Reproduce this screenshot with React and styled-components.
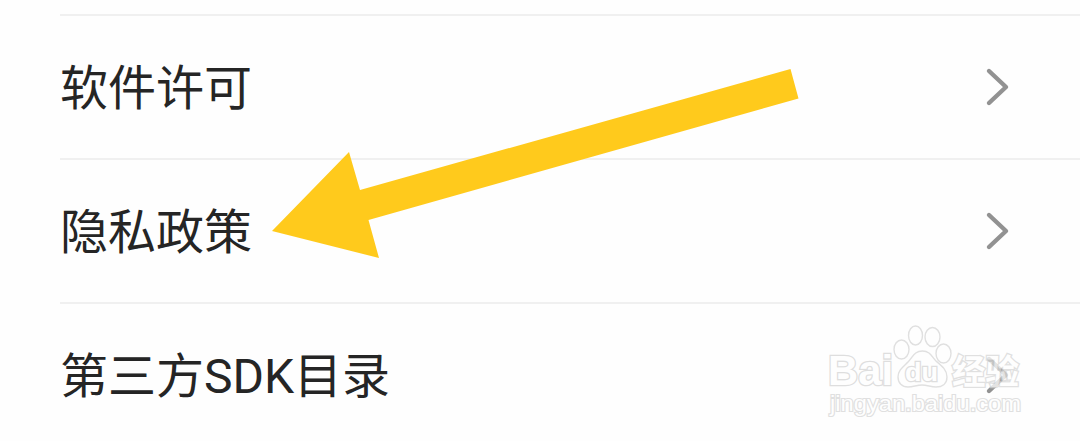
import React from 'react'
import styled, { createGlobalStyle } from 'styled-components'

const items = ['软件许可', '隐私政策', '第三方SDK目录']

const App = () => {
    return (
        <Page>
            <GlobalStyle />
            <List>
                {items.map(item => (
                    <Row key={item}>
                        <Label>{item}</Label>
                        <Chevron />
                    </Row>
                ))}
            </List>
            <Arrow />
            <Watermark />
        </Page>
    )
}

const Chevron = () => (
    <ChevronIcon viewBox="0 0 26 40">
        <path d="M5 4 L22 20 L5 36" />
    </ChevronIcon>
)

const Arrow = () => (
    <Overlay viewBox="0 0 1080 441">
        <polygon
            fill="#ffca1c"
            points="272,231 349,152 360,190 790.5,69 798.5,98.5 368.5,220 379,258"
        />
    </Overlay>
)

const Watermark = () => (
    <Overlay viewBox="0 0 1080 441">
        <Mark>
            <MarkText x="828" y="385" fontSize="42" textLength="65" lengthAdjust="spacingAndGlyphs">Bai</MarkText>
            <ellipse cx="901.500" cy="349.500" rx="7.500" ry="9.500" />
            <ellipse cx="915.500" cy="335.500" rx="7" ry="9.500" />
            <ellipse cx="932.500" cy="337" rx="7.500" ry="9.500" />
            <ellipse cx="943.500" cy="353.500" rx="7.500" ry="9.500" />
            <path d="M922.500 351 C930 351 932 357 936 361 C942 366 947 370 947 377 C947 384 942 387 936 387 C931 387 927 385 922 385 C917 385 913 387 908 387 C902 387 898 383 898 377 C898 370 903 367 908 362 C913 357 914 351 922.500 351 Z" />
            <MarkText x="905" y="381" fontSize="26" textLength="33" lengthAdjust="spacingAndGlyphs">du</MarkText>
            <MarkText x="952" y="383.500" fontSize="34" textLength="67" lengthAdjust="spacingAndGlyphs" $faded>经验</MarkText>
            <SiteText x="830" y="411" fontSize="22" textLength="191" lengthAdjust="spacingAndGlyphs">jingyan.baidu.com</SiteText>
        </Mark>
    </Overlay>
)

const GlobalStyle = createGlobalStyle`
    body {
        margin: 0;
        background-color: #fefefe;
    }
`

const Page = styled.div`
    position: relative;
    width: 1080px;
    height: 441px;
    overflow: hidden;
    background-color: #fefefe;
`

const List = styled.div`
    display: flex;
    flex-direction: column;
    padding: 14px 0 0 60px;
`

const Row = styled.div`
    display: flex;
    align-items: center;
    justify-content: space-between;
    box-sizing: border-box;
    height: 144px;
    padding-right: 70px;
    border-top: 2px solid #f0f0f0;
`

const Label = styled.span`
    padding-top: 4px;
    font-family: Roboto, "Noto Sans CJK SC", sans-serif;
    font-size: 48px;
    line-height: 64px;
    color: #252525;
`

const ChevronIcon = styled.svg`
    width: 26px;
    height: 40px;
    fill: none;
    stroke: #929292;
    stroke-width: 4.4;
    stroke-linecap: round;
    stroke-linejoin: round;
`

const Overlay = styled.svg`
    position: absolute;
    top: 0;
    left: 0;
    width: 1080px;
    height: 441px;
    pointer-events: none;
`

const Mark = styled.g`
    fill: #fefefe;
    stroke: #e0e0e0;
    stroke-width: 1.4;
`

/* outline goes under the fill so the glyphs stay white inside */
const MarkText = styled.text`
    font-family: "Liberation Sans", "Noto Sans CJK SC", sans-serif;
    font-weight: 700;
    paint-order: stroke;
    stroke-width: 2.6;
    opacity: ${props => props.$faded ? 0.75 : 1};
    stroke: ${props => props.$faded ? '#d6d6d6' : '#dedede'};
`

const SiteText = styled.text`
    font-family: "Liberation Sans", sans-serif;
    font-weight: 400;
    paint-order: stroke;
    stroke: #e0e0e0;
    stroke-width: 2.2;
`

export default App
